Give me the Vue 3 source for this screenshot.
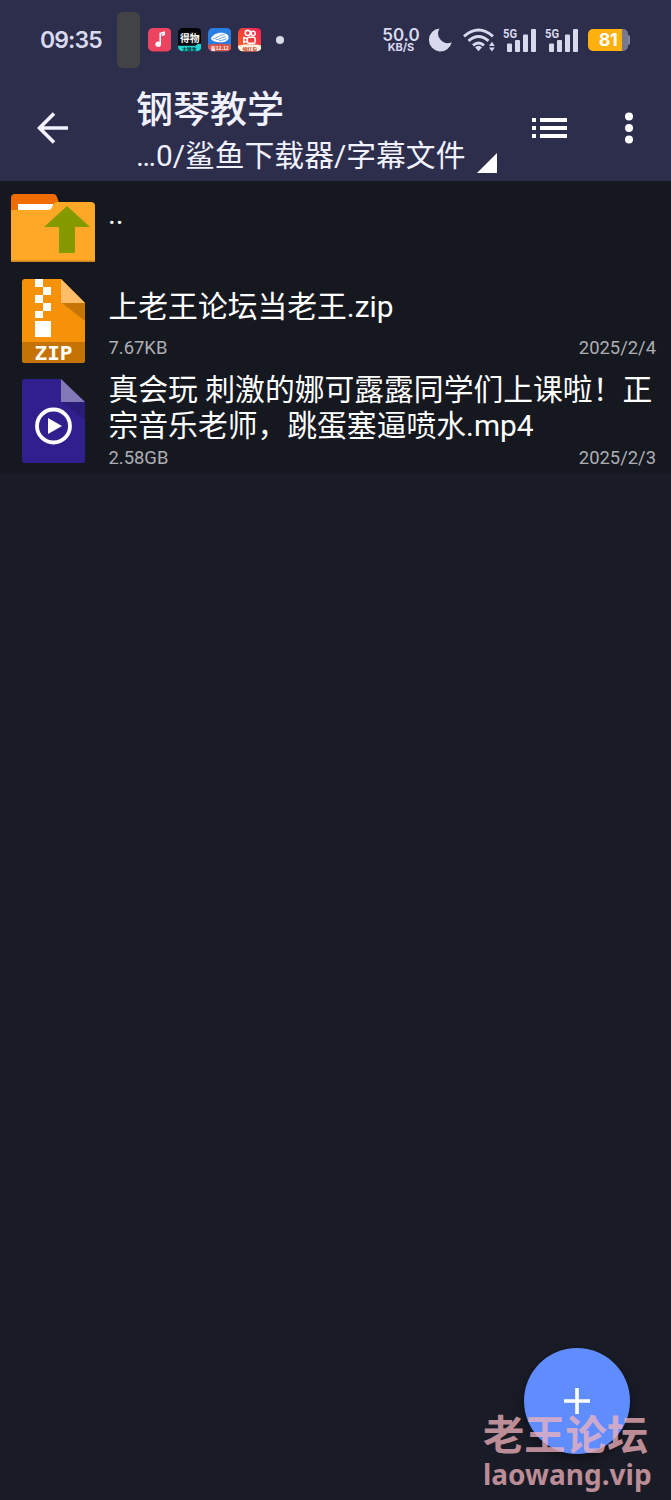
<script setup>
import { ref } from 'vue'

const title = ref('钢琴教学')
const path = ref('…0/鲨鱼下载器/字幕文件')

const files = ref([
  { type: 'zip', name: '上老王论坛当老王.zip', size: '7.67KB', date: '2025/2/4' },
  {
    type: 'video',
    name: '真会玩 刺激的娜可露露同学们上课啦！正宗音乐老师，跳蛋塞逼喷水.mp4',
    size: '2.58GB',
    date: '2025/2/3'
  }
])

const sims = [1, 2]
</script>

<template>
  <div class="screen">
    <header class="top">
      <div class="status">
        <span class="clock">09:35</span>
        <span class="pill" />
        <div class="apps">
          <svg class="app" viewBox="0 0 24 24">
            <rect width="24" height="24" rx="5" fill="#ec4360" />
            <path d="M12.5 16V5.5l4-1.2v2.4l-2.6.8" fill="none" stroke="#fff" stroke-width="1.6" />
            <circle cx="10.4" cy="16.5" r="2.8" fill="#fff" />
          </svg>
          <svg class="app" viewBox="0 0 24 24">
            <defs>
              <clipPath id="round"><rect width="24" height="24" rx="5" /></clipPath>
            </defs>
            <g clip-path="url(#round)">
              <rect width="24" height="24" fill="#030406" />
              <path d="M0 18h18l2-2h4v8H0z" fill="#23d3cf" />
            </g>
            <text x="12" y="14.5" class="app-name">得物</text>
            <text x="11.5" y="23" class="app-tag dark">大牌季</text>
          </svg>
          <svg class="app" viewBox="0 0 24 24">
            <g clip-path="url(#round)">
              <rect width="24" height="24" fill="#2a7de1" />
              <path d="M0 17q12-2 24 0v7H0z" fill="#dc5148" />
            </g>
            <path d="M3 11C5 5 15 3 20 7c2 3 1 6-3 7-5 1-11 1-14-3z" fill="#fff" />
            <path d="M5 11c4 0 7-5 12-4M8 12c4 0 6-3 10-3M11 13c3 0 5-1 8-2" fill="none" stroke="#2a7de1" stroke-width=".7" />
            <text x="12" y="22.3" class="app-tag light">省12.12</text>
          </svg>
          <svg class="app" viewBox="0 0 24 24">
            <defs>
              <linearGradient id="sunset" x1="1" y1="0" x2="0" y2="1">
                <stop offset="0" stop-color="#f21c55" />
                <stop offset="1" stop-color="#ff681d" />
              </linearGradient>
            </defs>
            <g clip-path="url(#round)">
              <rect width="24" height="24" fill="url(#sunset)" />
              <path d="M0 18q12-3 24 0v6H0z" fill="#fff1dd" />
            </g>
            <g fill="none" stroke="#fff" stroke-width="1.6">
              <circle cx="10" cy="5" r="2.6" />
              <circle cx="15.5" cy="5.5" r="2.1" />
              <rect x="9.5" y="9.5" width="8" height="6" rx="1.5" />
              <path d="M9.5 11L6 9.8v5l3.5-1.2" />
            </g>
            <text x="12" y="23" class="app-tag red">领红包</text>
          </svg>
        </div>
        <span class="more-apps" />

        <div class="speed">
          <b>50.0</b>
          <small>KB/S</small>
        </div>
        <svg class="moon" viewBox="0 0 24 24">
          <path d="M11.5.5A11.5 11.5 0 1 0 23.7 14.3 9.7 9.7 0 0 1 11.5.5z" fill="#d9d9ee" />
        </svg>
        <svg class="wifi" viewBox="0 0 32 24">
          <g fill="none" stroke="#d9d9ee" stroke-width="2.9">
            <path d="M1 8.3Q15.5-4.3 30 8.3" />
            <path d="M5.5 12.8Q15.5 4.1 25.5 12.8" />
            <path d="M10 17.3Q15.5 12.5 21 17.3" />
          </g>
          <path d="M12 19.2q3.5-3 7 0l-3.5 4z" fill="#d9d9ee" />
          <path d="M26 18l2.9-4.3 2.9 4.3zM26 19.4h5.8l-2.9 4z" fill="#d9d9ee" />
        </svg>
        <div class="signals">
          <svg v-for="n in sims" :key="n" class="signal" viewBox="0 0 33 25">
            <text x="0" y="9.5" class="net" textLength="14" lengthAdjust="spacingAndGlyphs">5G</text>
            <g fill="#d9d9ee">
              <rect x="4" y="15.5" width="5" height="8.5" rx="1" />
              <rect x="12" y="12" width="5" height="12" rx="1" />
              <rect x="20" y="6.5" width="5" height="17.5" rx="1" />
              <rect x="28" y="1" width="5" height="23" rx="1" />
            </g>
          </svg>
        </div>
        <div class="battery">
          <span class="level">81</span>
        </div>
      </div>

      <div class="toolbar">
        <svg class="back" viewBox="0 0 32 32">
          <path d="M31 16H3M17 1.5L2.5 16 17 30.5" fill="none" stroke="#f1f1ff" stroke-width="3.6" />
        </svg>
        <div class="heading">
          <h1>{{ title }}</h1>
          <div class="path">
            <span>{{ path }}</span>
            <svg viewBox="0 0 20 20"><path d="M20 0v20H0z" fill="#fff" /></svg>
          </div>
        </div>
        <svg class="list-icon" viewBox="0 0 35 20">
          <path d="M0 0h4v4H0zM8 0h27v4H8zM0 8h4v4H0zM8 8h27v4H8zM0 16h4v4H0zM8 16h27v4H8z" fill="#fff" />
        </svg>
        <svg class="menu-icon" viewBox="0 0 8 32">
          <g fill="#fff">
            <circle cx="4" cy="4.5" r="4" />
            <circle cx="4" cy="16" r="4" />
            <circle cx="4" cy="27.5" r="4" />
          </g>
        </svg>
      </div>
    </header>

    <main class="list">
      <div class="row parent">
        <svg class="folder" viewBox="0 0 84 68">
          <path d="M4 0h38q3 0 4 3l5 15H0V4q0-4 4-4z" fill="#ef6c00" />
          <path d="M7 10h35v7H7z" fill="#fff" />
          <path d="M0 16h37q3 0 4-3l1-2q1-3 4-3h34q4 0 4 4v56H0z" fill="#ffa726" />
          <path d="M0 66.5h84V68H0z" fill="#cf8620" />
          <path d="M56 12l23 21H64v26H48V33H33z" fill="#859900" />
        </svg>
        <span class="name">..</span>
      </div>

      <div v-for="file in files" :key="file.name" class="row" :class="file.type">
        <svg v-if="file.type === 'zip'" class="doc" viewBox="0 0 63 84">
          <path d="M3 0h36l24 24v57q0 3-3 3H3q-3 0-3-3V3q0-3 3-3z" fill="#f69208" />
          <path d="M40 24h23v18z" fill="#c87508" />
          <path d="M39 0l24 24H39z" fill="#ffbd68" />
          <path d="M0 63h63v18q0 3-3 3H3q-3 0-3-3z" fill="#c67305" />
          <path
            d="M13 0h8v8h-8zM21 8h8v8h-8zM13 16h8v8h-8zM21 24h8v8h-8zM13 32h8v7h-8zM13 42h16v16H13z"
            fill="#fff"
          />
          <text x="31.5" y="81" class="zip-label" textLength="38" lengthAdjust="spacingAndGlyphs">ZIP</text>
        </svg>
        <svg v-else class="doc" viewBox="0 0 63 84">
          <path d="M2 0h37l24 23v59q0 2-2 2H2q-2 0-2-2V2q0-2 2-2z" fill="#311f8e" />
          <path d="M40 23h23v18z" fill="#291b78" />
          <path d="M39 0l24 23H39z" fill="#8379b9" />
          <circle cx="31.5" cy="47" r="16.5" fill="none" stroke="#fff" stroke-width="3.8" />
          <path d="M26 39l14 8-14 8z" fill="#fff" />
        </svg>
        <div class="info">
          <div class="name">{{ file.name }}</div>
          <div class="meta">
            <span>{{ file.size }}</span>
            <span>{{ file.date }}</span>
          </div>
        </div>
      </div>
    </main>

    <button class="fab">
      <svg viewBox="0 0 28 28"><path d="M14 1v26M1 14h26" stroke="#fff" stroke-width="3.6" /></svg>
    </button>
    <div class="watermark">
      <span class="cn">老王论坛</span>
      <span class="url">laowang.vip</span>
    </div>
  </div>
</template>

<style>
body {
  background: #191b26;
}
</style>

<style scoped>
.screen {
  position: relative;
  height: 1500px;
  overflow: hidden;
  background: #191b26;
  color: #fff;
  font-family: Roboto, "Noto Sans CJK SC", sans-serif;
}

.top {
  height: 181px;
  background: #2c2e4c;
}

.status {
  display: flex;
  align-items: center;
  height: 80px;
  padding-left: 40px;
  color: #d9d9ee;
  font-family: Inter, sans-serif;
}

.clock {
  width: 77px;
  font-size: 23px;
  font-weight: 600;
  letter-spacing: -0.9px;
}

.pill {
  width: 23px;
  height: 56px;
  border-radius: 6px;
  background: #424344;
}

.apps {
  display: flex;
  gap: 6.5px;
  margin-left: 7.5px;
}
.app {
  width: 23.5px;
  height: 23.5px;
}

.app-name {
  fill: #fff;
  font: 700 10px "Noto Sans CJK SC", sans-serif;
  text-anchor: middle;
}
.app-tag {
  font: 700 5px "Noto Sans CJK SC", sans-serif;
  text-anchor: middle;
}
.dark { fill: #073b3d; }
.light { fill: #fff; }
.red { fill: #c33b28; }

.more-apps {
  width: 8px;
  height: 8px;
  margin-left: 15px;
  border-radius: 50%;
  background: #d9d9ee;
}

.speed {
  display: flex;
  flex-direction: column;
  align-items: center;
  width: 38px;
  margin-left: 98px;
}
.speed b {
  font-size: 17px;
  font-weight: 600;
  line-height: 14px;
}
.speed small {
  font-size: 11px;
  font-weight: 700;
  line-height: 11px;
}

.moon {
  width: 24px;
  height: 24px;
  margin-left: 8px;
}

.wifi {
  width: 32px;
  height: 24px;
  margin-left: 11px;
}

.signals {
  display: flex;
  gap: 9px;
  margin-left: 8px;
}
.signal {
  width: 33px;
  height: 25px;
  overflow: visible;
}
.net {
  fill: #d9d9ee;
  font: 700 13px Roboto, sans-serif;
}

.battery {
  display: flex;
  align-items: center;
  margin-left: 10px;
}
.battery::after {
  content: "";
  width: 2px;
  height: 10px;
  border-radius: 0 2px 2px 0;
  background: #85859b;
}
.level {
  width: 40px;
  height: 22px;
  border-radius: 5px;
  background: linear-gradient(90deg, #fdb00e 34px, #77798f 34px);
  color: #fff;
  font-size: 18px;
  font-weight: 700;
  letter-spacing: -0.5px;
  line-height: 22px;
  text-align: center;
}

.toolbar {
  display: flex;
  height: 101px;
  padding-left: 37px;
}

.back {
  width: 32px;
  height: 32px;
  margin-top: 32px;
}

.heading {
  width: 396px;
  margin-left: 67px;
  color: #f1f1ff;
}
.heading h1 {
  margin: 9px 0 0;
  font-size: 37px;
  font-weight: 500;
  line-height: 44px;
}

.path {
  display: flex;
  align-items: flex-end;
  margin-top: 1px;
  font-size: 29.8px;
  line-height: 44px;
  white-space: nowrap;
}
.path svg {
  width: 20px;
  height: 20px;
  margin: 0 0 5px 12px;
}

.list-icon {
  width: 35px;
  height: 20px;
  margin-top: 38px;
}
.menu-icon {
  width: 8px;
  height: 32px;
  margin: 32px 0 0 58px;
}

.list {
  height: 293px;
  background: #161820;
}

.row {
  display: flex;
  padding-right: 15px;
}

.parent {
  height: 89px;
  padding-left: 11px;
}
.folder {
  width: 84px;
  height: 68px;
  margin: 13px 13px 0 0;
}
.parent .name {
  margin-top: 15px;
}

.name {
  font-size: 29.8px;
  line-height: 36px;
}

.doc {
  flex: none;
  width: 63px;
  height: 84px;
  margin: 9px 23.5px 0 22px;
  overflow: visible;
}
.zip-label {
  fill: #fff;
  font: 700 19px "DejaVu Sans Mono", monospace;
  text-anchor: middle;
}

.info {
  flex: 1;
}
.zip {
  height: 100px;
}
.zip .info {
  padding-top: 19px;
}
.zip .meta {
  margin-top: 12px;
}
.video .info {
  padding-top: 2px;
}
.video .meta {
  margin-top: 3px;
}

.meta {
  display: flex;
  justify-content: space-between;
  color: #adaeb4;
  font-size: 18.4px;
  line-height: 22px;
}

.fab {
  position: absolute;
  left: 524px;
  top: 1348px;
  display: flex;
  align-items: center;
  justify-content: center;
  width: 106px;
  height: 106px;
  padding: 0;
  border: none;
  border-radius: 50%;
  background: #5f8cff;
  box-shadow: 0 5px 12px rgba(0, 0, 0, 0.4);
}
.fab svg {
  width: 28px;
  height: 28px;
}

.watermark {
  position: absolute;
  left: 483px;
  top: 1404px;
  display: flex;
  flex-direction: column;
  color: rgba(242, 179, 188, 0.75);
  font-family: "Noto Sans CJK SC", sans-serif;
  font-weight: 700;
  white-space: nowrap;
}
.cn {
  font-size: 41.3px;
  line-height: 56px;
}
.url {
  font-family: "Noto Sans", sans-serif;
  font-size: 28px;
  line-height: 28px;
}
</style>
